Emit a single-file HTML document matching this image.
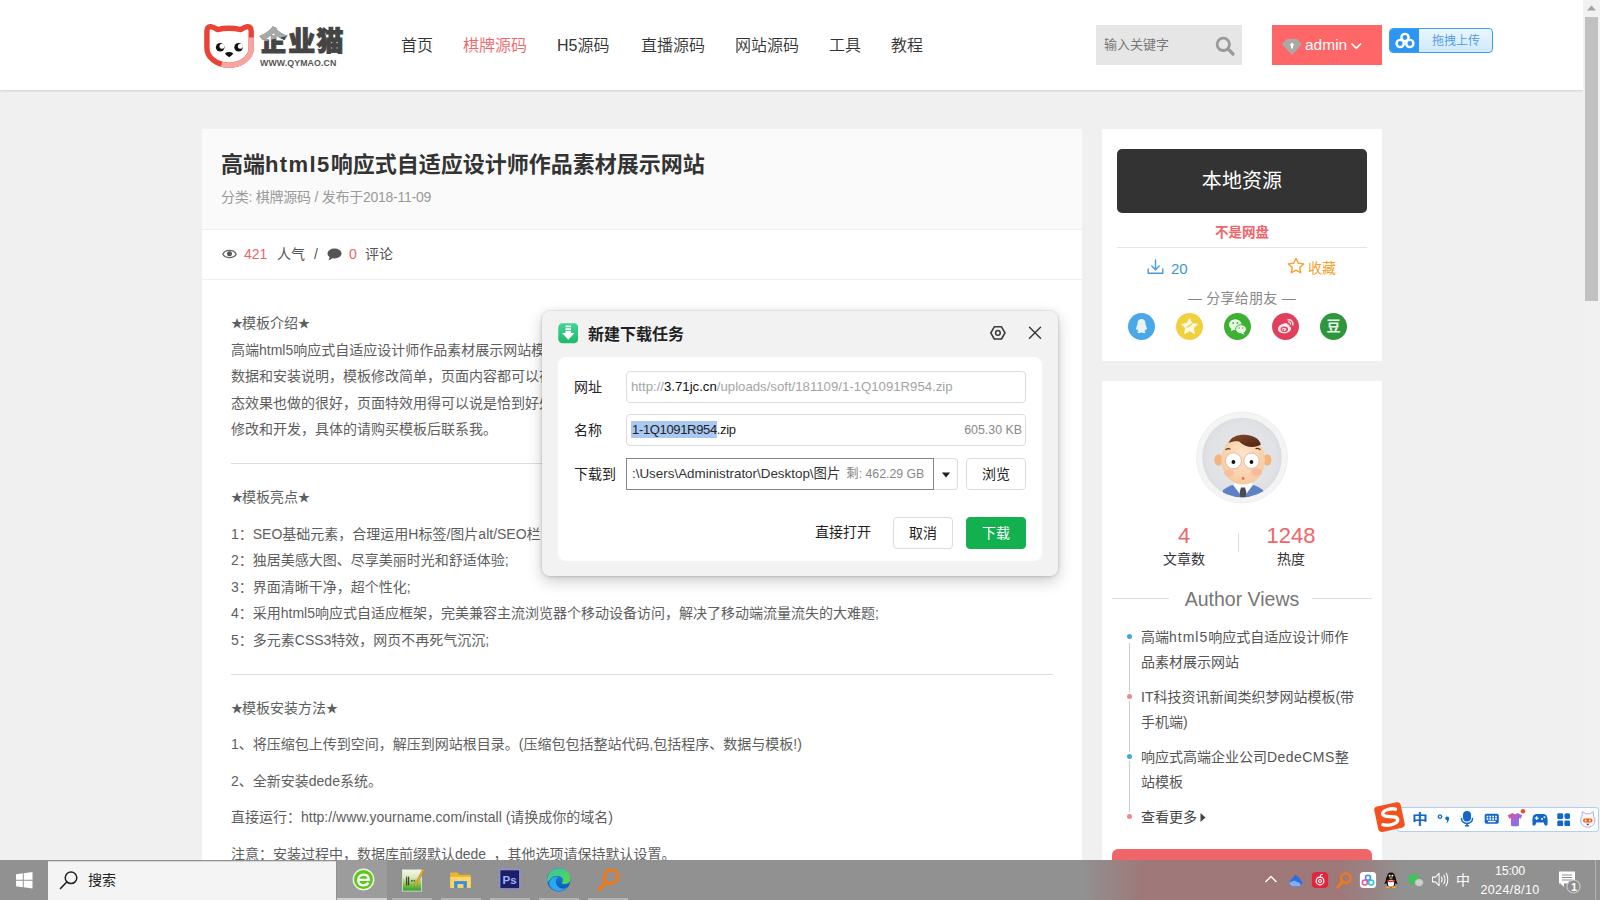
<!DOCTYPE html>
<html lang="zh-CN">
<head>
<meta charset="utf-8">
<title>高端html5响应式自适应设计师作品素材展示网站</title>
<style>
*{box-sizing:border-box;margin:0;padding:0}
html,body{width:1600px;height:900px;overflow:hidden}
body{position:relative;background:#f0f0f0;font-family:"Liberation Sans","Noto Sans CJK SC",sans-serif;color:#333;font-size:14px}
.abs{position:absolute}
.t{position:absolute;white-space:nowrap;line-height:1}
/* header */
#hdr{position:absolute;left:0;top:0;width:1583px;height:90px;background:#fff;box-shadow:0 1px 2px rgba(0,0,0,.14)}
.nav{position:absolute;top:38px;font-size:16px;line-height:16px;color:#333;white-space:nowrap;font-weight:350}
.nav.on{color:#f0656a}
#search{position:absolute;left:1096px;top:25px;width:146px;height:40px;background:#e6e6e6}
#adminbtn{position:absolute;left:1272px;top:25px;width:110px;height:40px;background:#ff6668}
#upbtn{position:absolute;left:1389px;top:28px;width:104px;height:25px;border:1px solid #3f9df0;border-radius:4px;background:linear-gradient(#eaf6ff,#cfe9fd);overflow:hidden}
/* main */
#main{position:absolute;left:202px;top:129px;width:880px;height:740px;background:#fff}
#mainhead{position:absolute;left:0;top:0;width:880px;height:101px;background:#fafafa;border-bottom:1px solid #eee}
#stats{position:absolute;left:0;top:100px;width:880px;height:51px;border-bottom:1px solid #eee}
.c{position:absolute;left:29px;white-space:nowrap;font-size:14px;line-height:20px;color:#5e5e5e}
.st{font-size:12px;display:inline-block;width:11px;text-align:center;letter-spacing:0;position:relative;top:-.5px}
.hr{position:absolute;left:29px;width:822px;height:1px;background:#ddd}
/* sidebar */
.card{position:absolute;left:1102px;width:280px;background:#fff}
.li{position:absolute;left:39px;font-size:14px;line-height:25px;color:#555;white-space:nowrap}
.dot{position:absolute;left:24.500px;width:5.400px;height:5.400px;border-radius:50%;margin-top:.8px}
/* taskbar */
#task{position:absolute;left:0;top:860px;width:1600px;height:40px;background:#919191}
/* dialog */
#dlg{position:absolute;left:542px;top:311px;width:516px;height:265px;background:#f2f2f2;border-radius:8px;box-shadow:0 0 0 1px rgba(0,0,0,.05),0 5px 16px rgba(0,0,0,.2),0 1px 5px rgba(0,0,0,.1)}
#dlgin{position:absolute;left:16px;top:46px;width:484px;height:204px;background:#fff;border-radius:8px}
.lab{position:absolute;left:32px;font-size:14px;line-height:16px;color:#222;white-space:nowrap}
.inp{position:absolute;left:84px;width:400px;height:32px;border:1px solid #dcdcdc;border-radius:4px;background:#fff;font-size:13px;line-height:30px;white-space:nowrap;color:#a4a4a4}
.btn{position:absolute;height:32px;border:1px solid #dcdcdc;border-radius:4px;background:#fff;font-size:14px;line-height:30px;text-align:center;color:#222}
</style>
</head>
<body>

<!-- ================= HEADER ================= -->
<div id="hdr">
  <svg class="abs" style="left:195px;top:15px" width="70" height="60" viewBox="0 0 70 60">
    <path d="M11.900 33 L11.900 16.500 Q11.900 11.300 15.800 11.700 Q18.800 12.200 22.300 14.600 Q34 11.800 45.800 14.600 Q49.300 12.200 52.300 11.700 Q56.200 11.300 56.200 16.500 L56.200 33 A22.150 17.300 0 0 1 34.050 50.300 A22.150 17.300 0 0 1 11.900 33 Z" fill="#fff" stroke="#ea4335" stroke-width="5.400" stroke-linejoin="round"/>
    <path d="M56.200 22.500 L56.200 33 A22.150 17.300 0 0 1 34.050 50.300 Q30 50.300 26.500 49.300" fill="none" stroke="#f6a5a2" stroke-width="5.400"/>
    <circle cx="25.200" cy="32.200" r="4.300" fill="#111"/><circle cx="27" cy="31.300" r="2.500" fill="#fff"/>
    <circle cx="43.600" cy="32.200" r="4.300" fill="#111"/><circle cx="45.400" cy="31.300" r="2.500" fill="#fff"/>
    <path d="M30 38.200 Q34 35.600 38.200 38.200 Q37.500 40.500 34.200 42.300 Q30.700 40.500 30 38.200Z" fill="#111"/>
  </svg>
  <div class="t" style="left:260px;top:25.500px;font-size:27px;font-weight:900;color:#444;letter-spacing:1.200px;-webkit-text-stroke:.9px #444;font-family:'Noto Sans CJK SC',sans-serif">企业猫</div>
  <div class="t" style="left:260px;top:25.500px;font-size:27px;font-weight:900;color:#a9a9a9;letter-spacing:1.200px;-webkit-text-stroke:.9px #a9a9a9;font-family:'Noto Sans CJK SC',sans-serif;clip-path:polygon(0 0,100% 0,100% 38%,0 62%)"><span>企</span></div>
  <div class="t" style="left:260px;top:59px;font-size:8.800px;font-weight:700;color:#555;letter-spacing:.1px">WWW.QYMAO.CN</div>

  <div class="nav" style="left:401px">首页</div>
  <div class="nav on" style="left:463px">棋牌源码</div>
  <div class="nav" style="left:557px">H5源码</div>
  <div class="nav" style="left:641px">直播源码</div>
  <div class="nav" style="left:735px">网站源码</div>
  <div class="nav" style="left:829px">工具</div>
  <div class="nav" style="left:891px">教程</div>

  <div id="search">
    <div class="t" style="left:8px;top:13px;font-size:13px;color:#777">输入关键字</div>
    <svg class="abs" style="left:118px;top:10px" width="22" height="22" viewBox="0 0 22 22"><circle cx="9.300" cy="9.300" r="6.200" fill="none" stroke="#999" stroke-width="2.800"/><path d="M14.200 14.200 L19 19" stroke="#999" stroke-width="3.200" stroke-linecap="round"/></svg>
  </div>
  <div id="adminbtn">
    <svg class="abs" style="left:10px;top:13px" width="20" height="17" viewBox="0 0 20 17"><path d="M5.500 2 L14.500 2 L18.500 6.300 L10 15.500 L1.500 6.300 Z" fill="#a9aaa6" stroke="#a9aaa6" stroke-width="2" stroke-linejoin="round"/><path d="M10 4.500 L12.500 7.500 L11 7.500 L11 10.500 L9 10.500 L9 7.500 L7.500 7.500Z" fill="#fff"/></svg>
    <div class="t" style="left:33px;top:12px;font-size:15.500px;color:#fff">admin</div>
    <svg class="abs" style="left:78px;top:16px" width="13" height="10" viewBox="0 0 13 10"><path d="M1.500 2.500 L6.300 7.300 L11.100 2.500" fill="none" stroke="#fff" stroke-width="1.700"/></svg>
  </div>
  <div id="upbtn">
    <div class="abs" style="left:0;top:0;width:29px;height:23px;background:#2d96f2"></div>
    <svg class="abs" style="left:4px;top:2px" width="22" height="19" viewBox="0 0 22 19"><g fill="none" stroke="#fff" stroke-width="2.400"><circle cx="11" cy="6.500" r="3.600"/><circle cx="6.200" cy="12.500" r="3.600"/><circle cx="15.800" cy="12.500" r="3.600"/></g></svg>
    <div class="t" style="left:42px;top:6px;font-size:12px;font-weight:350;color:#4a98e4">拖拽上传</div>
  </div>
</div>

<!-- ================= MAIN ================= -->
<div id="main">
  <div id="mainhead">
    <div class="t" style="left:19px;top:25px;font-size:22px;font-weight:700;color:#333">高端<span style="letter-spacing:1.4px">html5</span>响应式自适应设计师作品素材展示网站</div>
    <div class="t" style="left:19px;top:61px;font-size:14px;letter-spacing:-.25px;color:#999">分类: 棋牌源码 / 发布于2018-11-09</div>
  </div>
  <div id="stats">
    <svg class="abs" style="left:20px;top:19px" width="15" height="12" viewBox="0 0 15 12"><path d="M0.800 6.200 C3.300 1.200 11.700 1.200 14.200 6.200 C11.700 10.800 3.300 10.800 0.800 6.200Z" fill="#fff" stroke="#666" stroke-width="1.300"/><circle cx="7.500" cy="5.800" r="2.500" fill="#555"/></svg>
    <div class="t" style="left:42px;top:18px;font-size:14px;color:#f0656a">421</div>
    <div class="t" style="left:75px;top:18px;font-size:14px;color:#555">人气</div>
    <div class="t" style="left:112px;top:18px;font-size:14px;color:#555">/</div>
    <svg class="abs" style="left:125px;top:19px" width="15" height="13" viewBox="0 0 15 13"><ellipse cx="7.500" cy="5.500" rx="7" ry="5" fill="#555"/><path d="M3 8 L1.500 12.500 L7 9.500Z" fill="#555"/></svg>
    <div class="t" style="left:147px;top:18px;font-size:14px;color:#f0656a">0</div>
    <div class="t" style="left:163px;top:18px;font-size:14px;color:#555">评论</div>
  </div>

  <div class="c" style="top:184px"><span class="st">★</span>模板介绍<span class="st">★</span></div>
  <div class="c" style="top:211px">高端html5响应式自适应设计师作品素材展示网站模板,由于这套模板开发的时候是纯手写，自带测试</div>
  <div class="c" style="top:237px">数据和安装说明，模板修改简单，页面内容都可以在后台修改，模板使用了响应式的设计布局，动</div>
  <div class="c" style="top:264px">态效果也做的很好，页面特效用得可以说是恰到好处，有一定基础的设计师可以在此基础上进一步</div>
  <div class="c" style="top:290px">修改和开发，具体的请购买模板后联系我。</div>
  <div class="hr" style="top:334px"></div>
  <div class="c" style="top:358px"><span class="st">★</span>模板亮点<span class="st">★</span></div>
  <div class="c" style="top:395px">1：SEO基础元素，合理运用H标签/图片alt/SEO栏目设置等，利于搜索引擎收录；</div>
  <div class="c" style="top:421px">2：独居美感大图、尽享美丽时光和舒适体验;</div>
  <div class="c" style="top:448px">3：界面清晰干净，超个性化;</div>
  <div class="c" style="top:474px">4：采用html5响应式自适应框架，完美兼容主流浏览器个移动设备访问，解决了移动端流量流失的大难题;</div>
  <div class="c" style="top:501px">5：多元素CSS3特效，网页不再死气沉沉;</div>
  <div class="hr" style="top:545px"></div>
  <div class="c" style="top:569px"><span class="st">★</span>模板安装方法<span class="st">★</span></div>
  <div class="c" style="top:605px">1、将压缩包上传到空间，解压到网站根目录。(压缩包包括整站代码,包括程序、数据与模板!)</div>
  <div class="c" style="top:642px">2、全新安装dede系统。</div>
  <div class="c" style="top:678px">直接运行：http://www.yourname.com/install (请换成你的域名)</div>
  <div class="c" style="top:715px;word-spacing:3.500px">注意：安装过程中，数据库前缀默认dede ，其他选项请保持默认设置。</div>
</div>

<!-- ================= SIDEBAR ================= -->
<div class="card" style="top:129px;height:232px">
  <div class="abs" style="left:15px;top:20px;width:250px;height:64px;background:#333;border-radius:5px"></div>
  <div class="t" style="left:15px;width:250px;text-align:center;top:42px;font-size:20px;color:#fff;letter-spacing:.1px">本地资源</div>
  <div class="t" style="left:15px;width:250px;text-align:center;top:97px;font-size:13.500px;font-weight:700;color:#f0656a">不是网盘</div>
  <div class="abs" style="left:15px;top:118px;width:250px;height:1px;background:#e5e5e5"></div>
  <svg class="abs" style="left:45px;top:130px" width="17" height="16" viewBox="0 0 17 16"><g fill="none" stroke="#4a9bd8" stroke-width="1.400" stroke-linecap="round" stroke-linejoin="round"><path d="M8.500 1 L8.500 10.500 M4.800 7 L8.500 10.700 L12.200 7"/><path d="M1.200 10 L1.200 14.300 L15.800 14.300 L15.800 10"/></g></svg>
  <div class="t" style="left:69px;top:132px;font-size:15px;color:#3d96d6">20</div>
  <svg class="abs" style="left:185px;top:128px" width="18" height="17" viewBox="0 0 18 17"><path d="M9 1.300 L11.300 6.200 L16.700 6.900 L12.700 10.500 L13.800 15.800 L9 13.100 L4.200 15.800 L5.300 10.500 L1.300 6.900 L6.700 6.200 Z" fill="none" stroke="#f5a033" stroke-width="1.400" stroke-linejoin="round"/></svg>
  <div class="t" style="left:206px;top:132px;font-size:14px;color:#f5a033">收藏</div>
  <div class="t" style="left:15px;width:250px;text-align:center;top:162px;font-size:14px;letter-spacing:.25px;color:#888">— 分享给朋友 —</div>
  <!-- share icons -->
  <div class="abs" style="left:26px;top:184px;width:27px;height:27px;border-radius:50%;background:#4ba8e8"></div>
  <svg class="abs" style="left:26px;top:184px" width="27" height="27" viewBox="0 0 27 27"><path d="M13.500 6 C10.500 6 9.300 8.500 9.500 11 C9.500 12 8.200 14 8 16 C8 17 8.600 16.800 9.200 16 C9.300 17 9.800 17.800 10.500 18.400 C9.600 18.700 9.200 19.300 9.600 19.800 C10.200 20.300 12.500 20.200 13.500 19.600 C14.500 20.200 16.800 20.300 17.400 19.800 C17.800 19.300 17.400 18.700 16.500 18.400 C17.200 17.800 17.700 17 17.800 16 C18.400 16.800 19 17 19 16 C18.800 14 17.500 12 17.500 11 C17.700 8.500 16.500 6 13.500 6Z" fill="#e8f3fb"/></svg>
  <div class="abs" style="left:74px;top:184px;width:27px;height:27px;border-radius:50%;background:#f0d03c"></div>
  <svg class="abs" style="left:74px;top:184px" width="27" height="27" viewBox="0 0 27 27"><path d="M13.500 5.500 L15.900 10.600 L21.400 11.300 L17.300 15 L18.400 20.500 L13.500 17.700 L8.600 20.500 L9.700 15 L5.600 11.300 L11.100 10.600 Z" fill="#fffbe8" stroke="#fffbe8" stroke-width="1" stroke-linejoin="round"/><path d="M10.500 14.500 Q13 13.500 16 10.500" stroke="#f0d03c" stroke-width="1.100" fill="none"/></svg>
  <div class="abs" style="left:122px;top:184px;width:27px;height:27px;border-radius:50%;background:#3eb135"></div>
  <svg class="abs" style="left:122px;top:184px" width="27" height="27" viewBox="0 0 27 27"><ellipse cx="11.300" cy="11.600" rx="6.300" ry="5.300" fill="#e9f7e7"/><path d="M7.500 15.500 L7 18.300 L10.500 16.600Z" fill="#e9f7e7"/><ellipse cx="17" cy="16.200" rx="5.400" ry="4.500" fill="#e9f7e7" stroke="#3eb135" stroke-width="1"/><path d="M19.300 19.800 L20.600 21.800 L17 20.600Z" fill="#e9f7e7"/><circle cx="9.200" cy="10" r=".9" fill="#3eb135"/><circle cx="13.400" cy="10" r=".9" fill="#3eb135"/><circle cx="15.200" cy="15" r=".8" fill="#3eb135"/><circle cx="18.800" cy="15" r=".8" fill="#3eb135"/></svg>
  <div class="abs" style="left:170px;top:184px;width:27px;height:27px;border-radius:50%;background:#e0405c"></div>
  <svg class="abs" style="left:170px;top:184px" width="27" height="27" viewBox="0 0 27 27"><path d="M12 10.500 C8.500 11 5.500 14 6 16.800 C6.500 19.500 10 20.800 13.500 20.200 C17 19.600 19.500 17.200 19 15 C18.700 13.800 17.500 13.600 17.300 13.300 C17.700 12 17 11.200 15.500 11.600 C15.800 10.500 14.500 10 12 10.500Z" fill="#fbe9ec"/><ellipse cx="12.300" cy="16.200" rx="3.700" ry="2.800" fill="#e0405c"/><ellipse cx="12" cy="16.500" rx="2.200" ry="1.800" fill="#fbe9ec"/><circle cx="11.400" cy="16.800" r=".9" fill="#e0405c"/><path d="M16 6.800 C19 6.300 21.500 8.800 20.800 12" fill="none" stroke="#fbe9ec" stroke-width="1.300" stroke-linecap="round"/><path d="M16.400 9 C17.800 8.800 18.900 9.900 18.600 11.300" fill="none" stroke="#fbe9ec" stroke-width="1.200" stroke-linecap="round"/></svg>
  <div class="abs" style="left:218px;top:184px;width:27px;height:27px;border-radius:50%;background:#2e963d"></div>
  <div class="t" style="left:218px;top:190px;width:27px;text-align:center;font-size:14px;font-weight:700;color:#eaf6ec">豆</div>
</div>

<div class="card" style="top:381px;height:500px">
  <!-- avatar -->
  <svg class="abs" style="left:92px;top:29px" width="96" height="96" viewBox="0 0 96 96">
    <defs><clipPath id="avc"><circle cx="48" cy="47.500" r="39.800"/></clipPath>
    <radialGradient id="face" cx=".5" cy=".4" r=".65"><stop offset="0" stop-color="#fde6ca"/><stop offset="1" stop-color="#f6c79c"/></radialGradient>
    <radialGradient id="avbg" cx=".5" cy=".5" r=".5"><stop offset="0" stop-color="#e6e7ea"/><stop offset=".85" stop-color="#e1e2e5"/><stop offset="1" stop-color="#dcdde0"/></radialGradient>
    <linearGradient id="hair" x1="0" y1="0" x2="1" y2="1"><stop offset="0" stop-color="#8a4a2a"/><stop offset="1" stop-color="#4a2414"/></linearGradient></defs>
    <circle cx="48" cy="47.500" r="45.500" fill="#f4f4f5" stroke="#ececee" stroke-width=".8"/>
    <circle cx="48" cy="47.500" r="39.800" fill="url(#avbg)"/>
    <g clip-path="url(#avc)">
      <path d="M27 90 L29 80 Q37 73.500 49 73.500 Q61 73.500 69 80 L71 90Z" fill="#5d80c6"/>
      <path d="M39 75 L49 88 L59 75 L55 70 L43 70Z" fill="#fff"/>
      <path d="M47 77.500 L51 77.500 L52.300 82 L51.300 90 L46.700 90 L45.700 82Z" fill="#4a4a50"/>
      <ellipse cx="24.500" cy="50" rx="4.200" ry="5.800" fill="#f3b57c"/>
      <ellipse cx="73.300" cy="50" rx="4.200" ry="5.800" fill="#f3b57c"/>
      <ellipse cx="49.100" cy="50" rx="21.800" ry="24.600" fill="url(#face)"/>
      <path d="M34.500 33 C37 26.500 45 24.200 53 25 C61 25.800 66 30 66.800 34.500 C62 38 52 38.500 45 31.500 C42 31 38 31.500 34.500 33Z" fill="url(#hair)"/>
      <path d="M32 39.500 Q34 38 36 39 M62 38.600 Q64 37.800 66 39.500" stroke="#5a3018" stroke-width="1.300" fill="none" stroke-linecap="round"/>
      <ellipse cx="62.500" cy="62" rx="5.500" ry="3.800" fill="#f6a98f" opacity=".55"/>
      <ellipse cx="35" cy="63" rx="5" ry="3.500" fill="#f6a98f" opacity=".4"/>
      <circle cx="39.400" cy="50.800" r="8" fill="#fff" stroke="#d9b79a" stroke-width=".9"/>
      <circle cx="57.500" cy="50.800" r="7.700" fill="#fff" stroke="#d9b79a" stroke-width=".9"/>
      <circle cx="39.400" cy="52" r="1.900" fill="#111"/><circle cx="57.500" cy="52" r="1.900" fill="#111"/>
      <ellipse cx="49.100" cy="68.300" rx="1.300" ry="1.600" fill="#e26a6a"/>
    </g>
  </svg>
  <div class="t" style="left:52px;width:60px;text-align:center;top:144px;font-size:22px;color:#f0656a">4</div>
  <div class="t" style="left:52px;width:60px;text-align:center;top:171px;font-size:14px;color:#333">文章数</div>
  <div class="abs" style="left:136px;top:152px;width:1px;height:19px;background:#ddd"></div>
  <div class="t" style="left:159px;width:60px;text-align:center;top:144px;font-size:22px;color:#f0656a">1248</div>
  <div class="t" style="left:159px;width:60px;text-align:center;top:171px;font-size:14px;color:#333">热度</div>
  <div class="abs" style="left:10px;top:217px;width:57px;height:1px;background:#ddd"></div>
  <div class="abs" style="left:210px;top:217px;width:60px;height:1px;background:#ddd"></div>
  <div class="t" style="left:0;width:280px;text-align:center;top:209px;font-size:19.500px;color:#777">Author Views</div>

  <div class="abs" style="left:26.500px;top:262px;width:1px;height:170px;background:#ccc"></div>
  <div class="dot" style="top:252px;background:#3fa9d8;box-shadow:0 0 0 2px #fff"></div>
  <div class="li" style="top:244px">高端<span style="letter-spacing:1px">html5</span>响应式自适应设计师作<br>品素材展示网站</div>
  <div class="dot" style="top:312px;background:#f08a8a;box-shadow:0 0 0 2px #fff"></div>
  <div class="li" style="top:304px">IT科技资讯新闻类织梦网站模板(带<br>手机端)</div>
  <div class="dot" style="top:372px;background:#3fa9d8;box-shadow:0 0 0 2px #fff"></div>
  <div class="li" style="top:364px">响应式高端企业公司<span style="letter-spacing:.45px">DedeCMS</span>整<br>站模板</div>
  <div class="dot" style="top:432px;background:#f08a8a;box-shadow:0 0 0 2px #fff"></div>
  <div class="li" style="top:424px;color:#444">查看更多<svg width="6" height="9" viewBox="0 0 6 9" style="margin-left:3px"><path d="M.5 0 L5.500 4.500 L.5 9Z" fill="#444"/></svg></div>
  <div class="abs" style="left:10px;top:468px;width:260px;height:40px;background:#f0656a;border-radius:6px"></div>
</div>

<!-- ================= SCROLLBAR ================= -->
<div class="abs" style="left:1583px;top:0;width:17px;height:860px;background:#f1f1f1"></div>
<div class="abs" style="left:1585px;top:17px;width:13px;height:284px;background:#c1c1c1"></div>
<svg class="abs" style="left:1587px;top:5px" width="9" height="6" viewBox="0 0 9 6"><path d="M0 5.500 L4.500 .5 L9 5.500Z" fill="#a3a3a3"/></svg>

<!-- ================= IME BAR ================= -->
<div class="abs" style="left:1397px;top:806.500px;width:202px;height:25px;background:#fdfeff;border:1px solid #b4cfee;border-radius:3px"></div>
<svg class="abs" style="left:1372px;top:799px" width="36" height="36" viewBox="0 0 36 36">
  <g transform="rotate(-12 18 18)"><rect x="4" y="5" width="27" height="26" rx="3.500" fill="#f4511e"/>
  <path d="M25 11.500 C21 9.500 11.500 9.500 11.500 14 C11.500 18.500 25 16.500 25 22 C25 26.500 14 26.500 9.500 24" fill="none" stroke="#fff" stroke-width="3.400" stroke-linecap="round"/></g>
</svg>
<div class="t" style="left:1411.500px;top:811.500px;font-size:14.500px;font-weight:700;color:#1266cc;transform:scale(1.08,.95);transform-origin:0 50%">中</div>
<svg class="abs" style="left:1436px;top:812px" width="16" height="16" viewBox="0 0 16 16"><circle cx="4" cy="4.600" r="1.700" fill="none" stroke="#1266cc" stroke-width="1.300"/><path d="M11.200 4.400 a1.900 1.900 0 0 1 1.900 1.900 c0 2.300 -1.200 4.300 -3.300 5.500 c1 -1.200 1.400 -2.300 1.300 -3.600 a1.900 1.900 0 0 1 .1 -3.800Z" fill="#1266cc"/></svg>
<svg class="abs" style="left:1460px;top:810px" width="14" height="18" viewBox="0 0 14 18"><rect x="3" y="1" width="8" height="10.500" rx="4" fill="#1266cc"/><path d="M1.500 8.500 C1.500 15 12.500 15 12.500 8.500" fill="none" stroke="#1266cc" stroke-width="1.500" stroke-linecap="round"/><path d="M7 13.500 L7 15.500" stroke="#1266cc" stroke-width="1.600"/><rect x="4.800" y="15" width="4.400" height="1.500" rx=".7" fill="#1266cc"/></svg>
<svg class="abs" style="left:1484px;top:813px" width="15.500" height="11.500" viewBox="0 0 18 13"><rect x=".8" y=".8" width="16.400" height="11.400" rx="2" fill="#1266cc"/><g fill="#fff"><rect x="3" y="3" width="2" height="2"/><rect x="6.300" y="3" width="2" height="2"/><rect x="9.600" y="3" width="2" height="2"/><rect x="12.900" y="3" width="2" height="2"/><rect x="3" y="5.800" width="2" height="2"/><rect x="6.300" y="5.800" width="2" height="2"/><rect x="9.600" y="5.800" width="2" height="2"/><rect x="12.900" y="5.800" width="2" height="2"/><rect x="4.500" y="8.800" width="9" height="1.700"/></g></svg>
<svg class="abs" style="left:1506px;top:807.500px" width="20" height="20" viewBox="0 0 20 20"><defs><linearGradient id="tg" x1="0" y1="0" x2="1" y2="1"><stop offset="0" stop-color="#e05a7a"/><stop offset=".55" stop-color="#a066e0"/><stop offset="1" stop-color="#5a8cf0"/></linearGradient></defs><path d="M1.800 7.200 L6.500 5 Q9 7.500 11.500 5 L16.200 7.200 L14.700 10.800 L13 10 L13 17.800 Q9 18.800 5 17.800 L5 10 L3.300 10.800Z" fill="url(#tg)"/><circle cx="17" cy="3.200" r="2.300" fill="#f0502a"/></svg>
<svg class="abs" style="left:1531.500px;top:812.500px" width="16" height="13.500" viewBox="0 0 18 15"><path d="M5 1 L13 1 C16 1 17.500 3.500 17.500 7.500 L17.500 12.200 C17.500 14.500 14.500 14.500 13.800 12.600 L13.200 10.500 L4.800 10.500 L4.200 12.600 C3.500 14.500 .5 14.500 .5 12.200 L.5 7.500 C.5 3.500 2 1 5 1Z" fill="#1266cc"/><path d="M5.300 3.500 L5.300 7.700 M3.200 5.600 L7.400 5.600" stroke="#fff" stroke-width="1.300"/><circle cx="11.300" cy="6.600" r="1.100" fill="#fff"/><circle cx="14" cy="4.600" r="1.100" fill="#fff"/><path d="M6 11.300 Q9 13.200 12 11.300" stroke="#fff" stroke-width="1.100" fill="none"/></svg>
<svg class="abs" style="left:1556.500px;top:812.500px" width="13.500" height="13.500" viewBox="0 0 15 15"><g fill="#1266cc"><rect x=".3" y=".3" width="6.500" height="6.500" rx="1.600"/><rect x="8.200" y=".3" width="6.500" height="6.500" rx="2.600"/><rect x=".3" y="8.200" width="6.500" height="6.500" rx="1.600"/><rect x="8.200" y="8.200" width="6.500" height="6.500" rx="1.600"/></g></svg>
<svg class="abs" style="left:1578.500px;top:809.500px" width="17.500" height="18.500" viewBox="0 0 21 22"><path d="M3.500 7.500 L4 2 L8.500 4.500 Q10.500 4 12.500 4.500 L17 2 L17.500 7.500 Q19.500 10 19 13 C18.500 18 14.500 20.500 10.500 20.500 C6.500 20.500 2.500 18 2 13 Q1.500 10 3.500 7.500Z" fill="#fdf6f2" stroke="#a9a6e6" stroke-width="1.100" stroke-linejoin="round"/><rect x="4.800" y="10" width="11.400" height="5" rx="2.400" fill="#e8591f"/><circle cx="8" cy="12.400" r="1.200" fill="#fff"/><circle cx="13" cy="12.400" r="1.200" fill="#fff"/><path d="M8.500 16.300 L12.500 16.300 L10.500 18.600Z" fill="#5a3a2a"/></svg>
<!-- ================= TASKBAR ================= -->
<div id="task">
  <div class="abs" style="left:1082px;top:0;width:320px;height:40px;background:linear-gradient(90deg,rgba(172,96,98,0),rgba(172,96,98,.5) 19%,rgba(172,96,98,.5) 81%,rgba(172,96,98,0))"></div>
  <!-- start -->
  <svg class="abs" style="left:16px;top:12px" width="16.500" height="16.500" viewBox="0 0 17 17"><path d="M0 2.400 L7 1.400 L7 8 L0 8Z M8 1.250 L17 0 L17 8 L8 8Z M0 9 L7 9 L7 15.600 L0 14.600Z M8 9 L17 9 L17 17 L8 15.750Z" fill="#fff"/></svg>
  <!-- search -->
  <div class="abs" style="left:48px;top:1px;width:288px;height:39px;background:#f4f4f4;border-top:1px solid #d8d8d8"></div>
  <svg class="abs" style="left:59px;top:10px" width="20" height="20" viewBox="0 0 20 20"><circle cx="12" cy="7.800" r="5.800" fill="none" stroke="#222" stroke-width="1.500"/><path d="M7.800 12 L1.500 18.500" stroke="#222" stroke-width="1.600" stroke-linecap="round"/></svg>
  <div class="t" style="left:88px;top:13px;font-size:14px;color:#222">搜索</div>
  <!-- active app bg -->
  <div class="abs" style="left:337px;top:0;width:50px;height:40px;background:#9c9c9c"></div>
  <div class="abs" style="left:337px;top:38px;width:50px;height:2px;background:#d0d0d0"></div>
  <div class="abs" style="left:392px;top:38px;width:40px;height:2px;background:#b4b4b4"></div>
  <div class="abs" style="left:441px;top:38px;width:40px;height:2px;background:#b4b4b4"></div>
  <div class="abs" style="left:490px;top:38px;width:40px;height:2px;background:#b4b4b4"></div>
  <div class="abs" style="left:539px;top:38px;width:40px;height:2px;background:#b4b4b4"></div>
  <div class="abs" style="left:588px;top:38px;width:40px;height:2px;background:#b4b4b4"></div>
  <!-- 360 browser -->
  <svg class="abs" style="left:351.500px;top:8px" width="23" height="23" viewBox="0 0 26 26"><circle cx="13" cy="13" r="11.500" fill="#5cc81e" stroke="#e8f8d8" stroke-width="1.600"/><path d="M7 13.500 L19 13.500 C19 9.500 16.500 7.500 13 7.500 C9.500 7.500 7 10 7 13.500 C7 17.500 9.500 19.500 13 19.500 C15.500 19.500 17.500 18.500 18.600 16.500" fill="none" stroke="#fff" stroke-width="2.600"/></svg>
  <!-- notepad -->
  <svg class="abs" style="left:399.500px;top:6.500px" width="25" height="26" viewBox="0 0 26 27"><defs><linearGradient id="npg" x1="0" y1="0" x2="0" y2="1"><stop offset="0" stop-color="#f4f6ee"/><stop offset=".35" stop-color="#dbe9bf"/><stop offset=".7" stop-color="#7cc242"/><stop offset="1" stop-color="#2f9a34"/></linearGradient></defs><rect x="2.500" y="3" width="20" height="22" fill="url(#npg)" stroke="#e4ecd8" stroke-width=".8"/><path d="M7 10 L7 19 M9 10 L9 19" stroke="#222" stroke-width="1"/><path d="M11.500 14.500 L16 14.500" stroke="#333" stroke-width="1.300" stroke-dasharray="1.600 1"/><path d="M24 1.500 L25.500 3 L17 19.500 L15 20.500 L15.200 18.200Z" fill="#e3b12c" stroke="#a87818" stroke-width=".5"/></svg>
  <!-- explorer -->
  <svg class="abs" style="left:449px;top:9.500px" width="23" height="20.500" viewBox="0 0 27 24"><path d="M1.500 3 L10 3 L12 5.500 L25.500 5.500 L25.500 21 L1.500 21Z" fill="#f0b429"/><rect x="1.500" y="8" width="24" height="13" fill="#fcd667"/><rect x="6" y="13" width="15" height="8" fill="#3b8de0"/><rect x="10" y="16.500" width="7" height="4.500" fill="#fcd667"/></svg>
  <!-- photoshop -->
  <svg class="abs" style="left:499px;top:8.500px" width="21.500" height="20.500" viewBox="0 0 25 24"><rect x=".8" y=".8" width="23.400" height="22.400" fill="#1c1f63" stroke="#8e96e8" stroke-width="1.400"/><text x="4" y="17.500" font-family="Liberation Sans, sans-serif" font-size="13.500" font-weight="700" fill="#9fb0ff">Ps</text></svg>
  <!-- edge -->
  <svg class="abs" style="left:546px;top:7px" width="25.500" height="25.500" viewBox="0 0 27 27"><defs><linearGradient id="eg1" x1="0" y1="0" x2="1" y2="1"><stop offset="0" stop-color="#39c5a5"/><stop offset="1" stop-color="#56d94a"/></linearGradient><linearGradient id="eg2" x1="0" y1="0" x2="0" y2="1"><stop offset="0" stop-color="#1d8fe3"/><stop offset="1" stop-color="#0b55b5"/></linearGradient></defs><circle cx="13.500" cy="13.500" r="12.500" fill="url(#eg2)"/><path d="M2 10 C4 3 12 -.5 19 2.500 C24.500 5 26.500 10 25.800 14 C25 18 19 19 16.500 17 C18.500 15 18.500 11.500 15 10 C10 8 4 11 2 17 C1 14.500 1.200 12 2 10Z" fill="url(#eg1)"/><path d="M3.500 19 C3 13 8 9.500 13 10.500 C9.500 12.500 9.500 18 13.500 21.500 C16 23.500 20 23.500 23 21 C19 27 8 27.500 3.500 19Z" fill="#2aa9f0"/></svg>
  <!-- search orange -->
  <svg class="abs" style="left:595.500px;top:7px" width="25.500" height="25" viewBox="0 0 27 27"><circle cx="16" cy="10.500" r="7.300" fill="none" stroke="#f07a1a" stroke-width="3.400"/><path d="M10.500 16.500 L3.500 24" stroke="#f07a1a" stroke-width="4.200" stroke-linecap="round"/></svg>

  <!-- tray -->
  <svg class="abs" style="left:1264px;top:14px" width="14" height="10" viewBox="0 0 14 10"><path d="M1.500 8 L7 2.500 L12.500 8" fill="none" stroke="#fff" stroke-width="1.300"/></svg>
  <svg class="abs" style="left:1287px;top:12px" width="18" height="16" viewBox="0 0 20 18"><path d="M2 12 L9 3 L13 6 L17.500 12 L15 16 L5 16Z" fill="#2a6ee0"/><path d="M2 12 L8 9.500 L15 13 L15 16 L5 16Z" fill="#7fb0f5"/></svg>
  <svg class="abs" style="left:1311px;top:11px" width="18" height="18" viewBox="0 0 20 20"><rect x="1" y="1" width="18" height="18" rx="4.500" fill="#e0253c"/><circle cx="10" cy="11" r="4.300" fill="none" stroke="#fff" stroke-width="1.400"/><circle cx="10" cy="11" r="1.600" fill="none" stroke="#fff" stroke-width="1.200"/><path d="M10.500 6.500 C10 4.500 11.500 3.500 13 4" stroke="#fff" stroke-width="1.300" fill="none"/></svg>
  <svg class="abs" style="left:1335px;top:11px" width="18" height="18" viewBox="0 0 20 20"><circle cx="12" cy="8" r="5.300" fill="none" stroke="#f07a1a" stroke-width="2.600"/><path d="M8 12.500 L3 18" stroke="#f07a1a" stroke-width="3.200" stroke-linecap="round"/></svg>
  <svg class="abs" style="left:1359px;top:11px" width="18" height="18" viewBox="0 0 20 20"><rect x="1" y="1" width="18" height="18" rx="4" fill="#fff"/><g fill="none" stroke-width="1.700"><circle cx="10" cy="7.500" r="2.800" stroke="#3d8bf0"/><circle cx="6.500" cy="12.800" r="2.800" stroke="#e85aa0"/><circle cx="13.500" cy="12.800" r="2.800" stroke="#2ec5e0"/></g></svg>
  <svg class="abs" style="left:1383px;top:11px" width="16" height="17.600" viewBox="0 0 20 22"><ellipse cx="10" cy="12" rx="6.500" ry="8.500" fill="#111"/><ellipse cx="10" cy="15" rx="4" ry="4.800" fill="#fff"/><path d="M3.500 12 L1.500 16.500 L4.500 15Z M16.500 12 L18.500 16.500 L15.500 15Z" fill="#111"/><ellipse cx="10" cy="6.500" rx="4.600" ry="4.500" fill="#111"/><circle cx="8.300" cy="5.800" r="1.200" fill="#fff"/><circle cx="11.700" cy="5.800" r="1.200" fill="#fff"/><ellipse cx="10" cy="8.800" rx="2.400" ry="1" fill="#f5a623"/><path d="M5 11 Q10 13.500 15 11 L14.500 13 Q10 15 5.500 13Z" fill="#e0252f"/><ellipse cx="6.500" cy="20.300" rx="3" ry="1.200" fill="#f5a623"/><ellipse cx="13.500" cy="20.300" rx="3" ry="1.200" fill="#f5a623"/></svg>
  <svg class="abs" style="left:1407px;top:12px" width="18" height="16.400" viewBox="0 0 22 20"><ellipse cx="8.500" cy="8.500" rx="7" ry="6.300" fill="#3ec45a"/><path d="M4 13 L3.500 16.500 L7.500 14.500Z" fill="#3ec45a"/><ellipse cx="14.800" cy="13" rx="5.300" ry="4.800" fill="#c9cdc9" stroke="#8d8d8d" stroke-width=".6"/><circle cx="13" cy="12" r=".8" fill="#eee"/><circle cx="16.500" cy="12" r=".8" fill="#eee"/></svg>
  <svg class="abs" style="left:1431px;top:11px" width="19" height="17" viewBox="0 0 20 18"><path d="M1.500 6.500 L4.500 6.500 L8.500 2.500 L8.500 15.500 L4.500 11.500 L1.500 11.500Z" fill="none" stroke="#fff" stroke-width="1.100" stroke-linejoin="round"/><path d="M11 6.500 Q12.500 9 11 11.500 M13.500 4.500 Q16 9 13.500 13.500 M16 2.500 Q19.500 9 16 15.500" fill="none" stroke="#fff" stroke-width="1.100" stroke-linecap="round"/></svg>
  <div class="t" style="left:1456px;top:13px;font-size:14px;color:#fff">中</div>
  <div class="t" style="left:1480px;width:60px;text-align:center;top:5px;font-size:12.500px;letter-spacing:-.25px;color:#fff">15:00</div>
  <div class="t" style="left:1475px;width:70px;text-align:center;top:24px;font-size:12.500px;letter-spacing:.4px;color:#fff">2024/8/10</div>
  <svg class="abs" style="left:1556px;top:9px" width="26" height="26" viewBox="0 0 26 26"><path d="M3 2.500 L19 2.500 L19 14.500 L8 14.500 L8 18 L4.500 14.500 L3 14.500Z" fill="#fff"/><path d="M6 6 L16 6 M6 8.500 L16 8.500 M6 11 L16 11" stroke="#8d8d8d" stroke-width="1"/><circle cx="17.500" cy="17.500" r="6.500" fill="#8d8d8d" stroke="#c8c8c8" stroke-width="1.200"/><text x="15" y="22" font-family="Liberation Sans, sans-serif" font-size="11" font-weight="700" fill="#fff">1</text></svg>
  <div class="abs" style="left:1595px;top:0;width:1px;height:40px;background:#b4b4b4"></div>
</div>

<!-- ================= DIALOG ================= -->
<div id="dlg">
  <svg class="abs" style="left:15.500px;top:12px" width="20.500" height="20.500" viewBox="0 0 22 22"><defs><linearGradient id="dg" x1="0" y1="0" x2="0" y2="1"><stop offset="0" stop-color="#3fd692"/><stop offset="1" stop-color="#1fba6c"/></linearGradient></defs><rect x=".3" y=".3" width="21.400" height="21.400" rx="4.500" fill="url(#dg)"/><path d="M8 2.800 L14 2.800 L14 4.600 L8 4.600Z M8 5.700 L14 5.700 L14 7.400 L8 7.400Z M8 8.400 L14 8.400 L14 10.800 L17.600 10.800 L11 18 L4.400 10.800 L8 10.800Z" fill="#fff"/></svg>
  <div class="t" style="left:46px;top:16px;font-size:16px;font-weight:700;color:#222">新建下载任务</div>
  <svg class="abs" style="left:446px;top:12px" width="20" height="20" viewBox="0 0 20 20"><path d="M2.800 9.900 L6.300 3.800 L13.500 3.800 L17 9.900 L13.500 16 L6.300 16Z" fill="none" stroke="#3a3a3a" stroke-width="1.600" stroke-linejoin="round"/><circle cx="9.900" cy="9.900" r="2.300" fill="none" stroke="#3a3a3a" stroke-width="1.500"/></svg>
  <svg class="abs" style="left:486px;top:15px" width="14" height="14" viewBox="0 0 14 14"><path d="M1.500 1.300 L12.500 12.300 M12.500 1.300 L1.500 12.300" stroke="#3a3a3a" stroke-width="1.500" stroke-linecap="round"/></svg>
  <div id="dlgin">
    <div class="lab" style="left:16px;top:22px">网址</div>
    <div class="inp" style="left:68px;top:14px;padding-left:4px;font-size:13.200px"><span>http://</span><span style="color:#111">3.71jc.cn</span><span>/uploads/soft/181109/1-1Q1091R954.zip</span></div>
    <div class="lab" style="left:16px;top:65px">名称</div>
    <div class="inp" style="left:68px;top:57px;padding-left:4px;color:#222;font-size:13px;letter-spacing:-.34px"><span style="background:#a9c9f2;padding:1px 0 1px 1px">1-1Q1091R954</span>.zip<span style="position:absolute;right:3px;top:0;color:#888;font-size:12.400px;letter-spacing:0">605.30 KB</span></div>
    <div class="lab" style="left:16px;top:109px">下载到</div>
    <div class="inp" style="left:68px;top:101px;width:308px;height:32px;border-color:#858585;border-radius:0;background:#fff;padding-left:5px;color:#333;line-height:30px;font-size:13.400px">:\Users\Administrator\Desktop\图片<span style="color:#888;margin-left:6px;font-size:12.300px">剩: 462.29 GB</span></div>
    <div class="abs" style="left:376px;top:101px;width:24px;height:32px;border:1px solid #dcdcdc;border-left:0;border-radius:0 4px 4px 0;background:#fff"></div>
    <svg class="abs" style="left:383px;top:115px" width="10" height="6" viewBox="0 0 10 6"><path d="M.8 .5 L9.200 .5 L5 5.500Z" fill="#222"/></svg>
    <div class="btn" style="left:408px;top:101px;width:60px;height:32px;line-height:30px">浏览</div>
    <div class="t" style="left:257px;top:168px;font-size:14px;color:#222">直接打开</div>
    <div class="btn" style="left:335px;top:160px;width:60px">取消</div>
    <div class="btn" style="left:408px;top:160px;width:60px;background:#12b04f;border-color:#12b04f;color:#fff">下载</div>
  </div>
</div>


</body>
</html>
